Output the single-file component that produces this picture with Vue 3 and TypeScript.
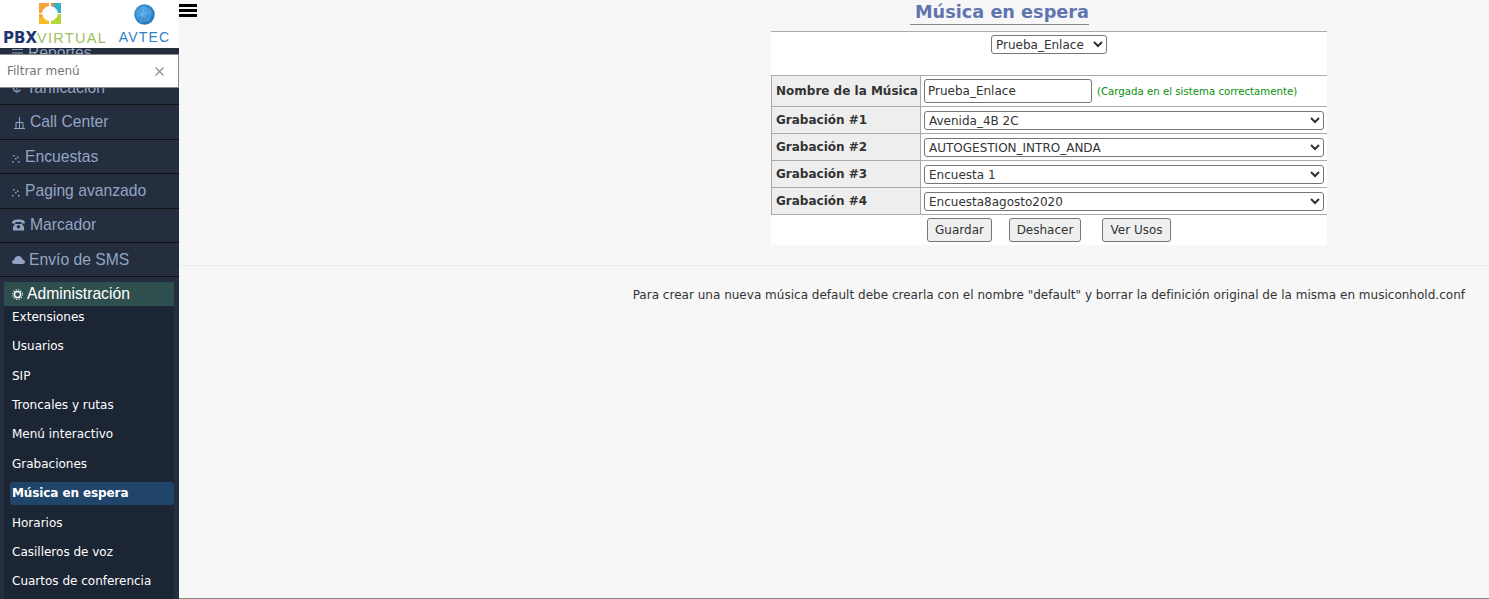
<script setup lang="ts">
const topItems = [
  { label: 'Reportes', icon: 'bars' },
  { label: 'Tarificación', icon: 'coin' },
  { label: 'Call Center', icon: 'tree' },
  { label: 'Encuestas', icon: 'dots' },
  { label: 'Paging avanzado', icon: 'dots' },
  { label: 'Marcador', icon: 'phone' },
  { label: 'Envío de SMS', icon: 'cloud' },
]
const subItems = ['Extensiones', 'Usuarios', 'SIP', 'Troncales y rutas', 'Menú interactivo', 'Grabaciones', 'Música en espera', 'Horarios', 'Casilleros de voz', 'Cuartos de conferencia']
const recordings = [
  { label: 'Grabación #1', value: 'Avenida_4B 2C' },
  { label: 'Grabación #2', value: 'AUTOGESTION_INTRO_ANDA' },
  { label: 'Grabación #3', value: 'Encuesta 1' },
  { label: 'Grabación #4', value: 'Encuesta8agosto2020' },
]
</script>

<template>
  <div class="page">
    <aside class="sidebar">
      <div class="brand">
        <div class="brand-left">
          <svg class="cross" width="24" height="23" viewBox="0 0 24 23">
            <path d="M1 1h10v3L8 5 5 8l-1 3H1z" fill="#f5a13c" />
            <path d="M13 1h10v10h-3l-1-3-3-3-3-1z" fill="#35b2c9" />
            <path d="M13 1h3v3l-1 .700-2-.700z" fill="#ee8a3c" />
            <path d="M1 12h3l1 3 3 3 3 1v3H1z" fill="#f9bb2a" />
            <path d="M23 12v10H13v-3l3-1 3-3 1-3z" fill="#b6d636" />
            <path d="M1 12h3l.700 2-1.700 2H1z" fill="#f3a53a" />
          </svg>
          <div class="pbx"><b>PBX</b><span>VIRTUAL</span></div>
        </div>
        <div class="brand-right">
          <svg width="21" height="21" viewBox="0 0 21 21">
            <defs>
              <radialGradient id="globe" cx="45%" cy="40%" r="60%">
                <stop offset="0" stop-color="#5cb1ea" />
                <stop offset="1" stop-color="#1c74bb" />
              </radialGradient>
            </defs>
            <circle cx="10.5" cy="10.5" r="10.2" fill="url(#globe)" />
            <path d="M3 7l7-4 7 5-2 8-8 2-4-6zM10 3l-3 15M3 7l12 9M17 8L3 12" fill="none" stroke="#8cc6ef" stroke-width=".4" />
          </svg>
          <div class="avtec">AVTEC</div>
        </div>
      </div>

      <div class="nav-clip">
        <nav class="nav">
          <a v-for="item in topItems" :key="item.label" class="top-item">
            <svg v-if="item.icon === 'bars'" class="ico" width="11" height="10" viewBox="0 0 11 10"><path d="M0 1.5h11M0 5h11M0 8.500h11" stroke="currentColor" /></svg>
            <span v-else-if="item.icon === 'coin'" class="ico-text">₵</span>
            <svg v-else-if="item.icon === 'tree'" class="ico tree" width="13" height="12" viewBox="0 0 13 12"><path d="M6.500 0v5M3 11V5.500h7V11M6.500 5.500V11" stroke="currentColor" fill="none" /><path d="M1 11.500h4M4.500 11.500h4M8 11.500h4" stroke="currentColor" fill="none" /></svg>
            <svg v-else-if="item.icon === 'dots'" class="ico dots" width="9" height="8" viewBox="0 0 9 8"><g fill="currentColor"><rect x="1" y="0" width="1.500" height="1.500" /><rect x="5" y="1.500" width="1.500" height="1.500" /><rect x="3" y="3" width="1.500" height="1.500" /><rect x="0" y="6" width="1.500" height="1.500" /><rect x="6" y="6" width="1.500" height="1.500" /></g></svg>
            <svg v-else-if="item.icon === 'phone'" class="ico" width="13" height="12" viewBox="0 0 13 12"><path d="M0 4.500C0 1 3 .5 6.500.5S13 1 13 4.500H9.500V3h-6v1.500zM3 5h7l2 3v3.500H1V8z" fill="currentColor" /><circle cx="6.500" cy="7.800" r="1.800" fill="#252e3e" /></svg>
            <svg v-else class="ico cloud" width="13" height="8" viewBox="0 0 13 8"><path d="M2.500 8C.5 8 0 6.700 0 6c0-1.200 1-2 2-2C2.500 1.500 4.500 0 6.500 0c2 0 3.500 1.200 4 3.500 1.500.2 2.500 1.300 2.500 2.500S12 8 10.500 8z" fill="currentColor" /></svg>
            <span>{{ item.label }}</span>
          </a>
          <div class="admin">
            <div class="admin-head">
              <svg class="ico" width="11" height="11" viewBox="0 0 12 12"><circle cx="6" cy="6" r="3.300" fill="none" stroke="currentColor" stroke-width="1.500" /><circle cx="6" cy="6" r="5.200" fill="none" stroke="currentColor" stroke-width="1.200" stroke-dasharray="1.400 1.320" /></svg>
              <span>Administración</span>
            </div>
            <a v-for="sub in subItems" :key="sub" class="sub-item" :class="{ active: sub === 'Música en espera' }">{{ sub }}</a>
          </div>
        </nav>
      </div>

      <div class="filter">
        <span>Filtrar menú</span>
        <svg width="9" height="9" viewBox="0 0 9 9"><path d="M.5.5l8 8M8.500.5l-8 8" stroke="#8a8a8a" stroke-width="1.100" /></svg>
      </div>
    </aside>

    <main class="main">
      <div class="burger"><i></i><i></i><i></i></div>
      <section class="top">
        <div class="panel-wrap">
          <h1 class="title"><span>Música en espera</span></h1>
          <div class="panel">
            <div class="picker">
              <select class="pick"><option>Prueba_Enlace</option></select>
            </div>
            <table class="grid">
              <tbody>
                <tr class="first">
                  <th>Nombre de la Música</th>
                  <td class="name-cell">
                    <input class="name" value="Prueba_Enlace" />
                    <span class="ok">(Cargada en el sistema correctamente)</span>
                  </td>
                </tr>
                <tr v-for="r in recordings" :key="r.label">
                  <th>{{ r.label }}</th>
                  <td><select class="rec"><option>{{ r.value }}</option></select></td>
                </tr>
              </tbody>
            </table>
            <div class="actions">
              <button class="g">Guardar</button>
              <button class="d">Deshacer</button>
              <button class="v">Ver Usos</button>
            </div>
          </div>
        </div>
      </section>
      <p class="note">Para crear una nueva música default debe crearla con el nombre "default" y borrar la definición original de la misma en musiconhold.conf</p>
    </main>
  </div>
</template>

<style>
html, body { margin: 0; height: 100%; overflow: hidden; }
</style>

<style scoped>
.page { display: flex; width: 1489px; height: 599px; font-family: "DejaVu Sans", sans-serif; font-size: 12px; color: #333; overflow: hidden; }
.sidebar { position: relative; flex: 0 0 179px; width: 179px; display: flex; flex-direction: column; background: #252e3e; overflow: hidden; }
.brand { flex: 0 0 48px; display: flex; background: #fff; position: relative; z-index: 1; }
.brand-left { width: 110px; padding-top: 2px; display: flex; flex-direction: column; align-items: flex-start; box-sizing: border-box; }
.cross { margin-left: 38px; }
.pbx { margin-top: 6px; padding-left: 3px; font-family: "Liberation Sans", sans-serif; line-height: 14px; white-space: nowrap; }
.pbx b { color: #1c3570; font-family: "DejaVu Sans", sans-serif; font-weight: 700; font-size: 15px; }
.pbx span { color: #9dbf5c; font-size: 14.500px; letter-spacing: 1.300px; }
.brand-right { flex: 1; padding-top: 4px; display: flex; flex-direction: column; align-items: center; }
.avtec { margin-top: 5px; font-family: "Liberation Sans", sans-serif; font-size: 14px; line-height: 14px; color: #2f80c9; letter-spacing: 1.200px; }

.nav-clip { flex: 1; min-height: 0; overflow: hidden; }
.nav { margin-top: -11.300px; display: flex; flex-direction: column; }
.top-item { box-sizing: border-box; height: 34.400px; flex: none; display: flex; align-items: center; gap: 5px; padding-left: 12px; border-bottom: 1px solid #0f1116; font-family: "Liberation Sans", sans-serif; font-size: 15.700px; color: #93a5c4; white-space: nowrap; }
.ico { flex: none; }
.ico-text { font-size: 13px; }
.tree { margin-left: 1px; margin-top: 1px; margin-right: -1px; }
.dots { margin-top: 4px; margin-right: -1px; }
.cloud { margin-right: -1px; }
.admin { margin: 4.700px 5px 0 4px; background: #1c2533; padding-bottom: 4px; }
.admin-head { height: 24px; margin-bottom: -.800px; display: flex; align-items: center; gap: 4px; padding-left: 8px; background: #2f4f4f; color: #fff; font-family: "Liberation Sans", sans-serif; font-size: 15.700px; }
.sub-item { display: flex; align-items: center; height: 23px; margin: 0 0 6.400px 6px; padding-left: 2px; border-radius: 3px; color: #fff; font-size: 12px; white-space: nowrap; }
.sub-item.active { background: #21446b; font-weight: 700; letter-spacing: -.1px; }
.filter { position: absolute; left: -2px; top: 54px; right: 0; height: 34px; box-sizing: border-box; display: flex; align-items: center; justify-content: space-between; padding: 0 14px 0 9px; background: #fff; border: 1px solid #888; border-width: 1px 1px 1px 0; color: #757575; font-size: 12px; z-index: 2; }

.main { position: relative; flex: 1; min-width: 0; background: #f7f7f7; border-bottom: 1px solid #888; box-sizing: border-box; }
.burger { position: absolute; left: 0; top: 4px; width: 18px; display: flex; flex-direction: column; gap: 2px; }
.burger i { display: block; height: 3px; background: #000; }
.top { height: 266px; box-sizing: border-box; border-bottom: 1px solid #ececec; display: flex; justify-content: flex-end; padding-right: 162px; }
.panel-wrap { width: 556px; }
.title { margin: 0; height: 31px; box-sizing: border-box; padding-right: 99px; text-align: center; font-size: 17.700px; line-height: 24px; font-weight: 700; color: #6075b0; }
.title span { display: inline-block; padding: 0 0 0 5px; height: 23px; line-height: 23px; border-bottom: 1px solid #888; }
.panel { background: #fff; border-top: 1px solid #aaa; height: 214px; box-sizing: border-box; }
.picker { height: 43px; padding-top: 3px; text-align: center; box-sizing: border-box; }
.pick { height: 19px; width: 116px; font: 12px "DejaVu Sans", sans-serif; color: #333; background: #fff; border: 1px solid #767676; border-radius: 3px; padding: 0; }
.grid { width: 100%; border-collapse: collapse; table-layout: fixed; }
.grid th, .grid td { border: 1px solid #aaa; padding: 0; height: 27px; box-sizing: border-box; }
.grid tr.first th, .grid tr.first td { height: 31px; }
.grid th { width: 149px; background: #eee; font-size: 12px; font-weight: 700; text-align: left; padding: 0 0 1px 4px; color: #333; white-space: nowrap; }
.grid tr.first th { padding-bottom: 0; }
.grid td { padding: 1px 0 0 3px; border-right: 0; background: #fff; }
.grid tr.first td { padding-top: 0; }
.name { width: 168px; height: 24px; box-sizing: border-box; font: 12px "DejaVu Sans", sans-serif; color: #333; border: 1px solid #767676; border-radius: 3px; padding: 0 3px; vertical-align: middle; background: #fff; outline: none; }
.ok { margin-left: 5px; font-size: 10.200px; color: #0a8f0a; vertical-align: middle; }
.rec { display: block; width: 400px; height: 19px; font: 12px "DejaVu Sans", sans-serif; color: #333; background: #fff; border: 1px solid #767676; border-radius: 3px; padding: 0; }
.actions { display: flex; padding: 3px 0 0 156px; }
button { height: 24px; padding: 0; font: 12px "DejaVu Sans", sans-serif; color: #333; background: #efefef; border: 1px solid #767676; border-radius: 3px; }
.g { width: 65px; margin-right: 17px; }
.d { width: 72px; margin-right: 21px; }
.v { width: 69px; }
.note { margin: 21px 24px 0 0; text-align: right; font-size: 12px; letter-spacing: .015px; line-height: 16px; color: #333; white-space: nowrap; }
</style>
